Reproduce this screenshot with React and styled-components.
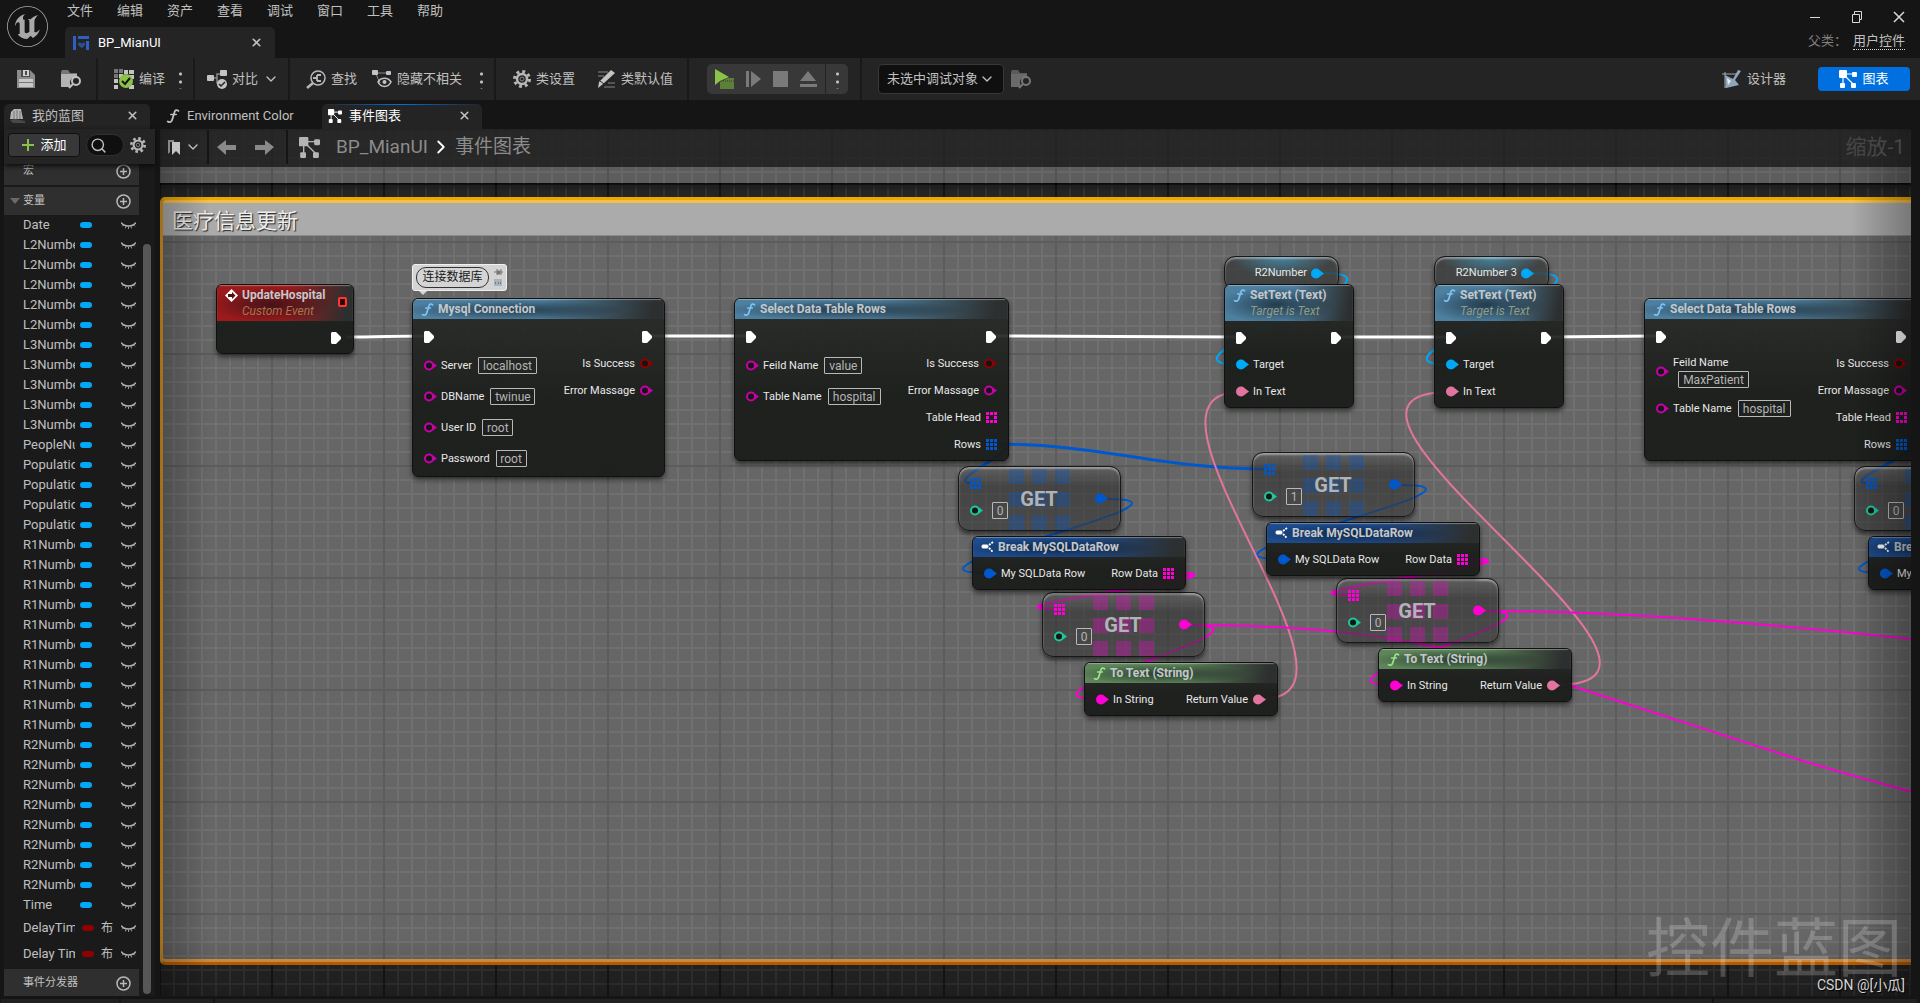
import React from "react";
import styled, { createGlobalStyle, css } from "styled-components";
import { ChevronDown, ChevronRight, Search, X } from "lucide-react";
import { SiUnrealengine } from "react-icons/si";

const vars = {
  font: `Roboto, "Noto Sans CJK SC", sans-serif`,
  window: "#151515",
  panel: "#242424",
  list: "#1a1a1a",
  section: "#2f2f2f",
  text: "#c0c0c0",
  bright: "#ffffff",
  primary: "#0070e0",
  green: "#8bc24a",
  exec: "#ffffff",
  object: "#00a8f8",
  string: "#c800a8",
  magenta: "#ff00d4",
  struct: "#0058cc",
  textPin: "#e2759f",
  int: "#1fc69c",
  bool: "#8f0000",
};

/* ---------- data ---------- */

const menu = ["文件", "编辑", "资产", "查看", "调试", "窗口", "工具", "帮助"];

const repeat = (name, count) => Array(count).fill(name);

const variables = [
  "Date",
  ...repeat("L2Number", 5),
  ...repeat("L3Number", 5),
  "PeopleNumber",
  ...repeat("Population", 4),
  ...repeat("R1Number", 10),
  ...repeat("R2Number", 8),
  "Time",
];

const selectOutputs = [
  { kind: "exec" },
  { label: "Is Success", kind: "ring", color: vars.bool },
  { label: "Error Massage", kind: "ring", color: vars.string },
  { label: "Table Head", kind: "frame", color: vars.magenta },
  { label: "Rows", kind: "array", color: vars.struct },
];

const setTextNode = {
  type: "func",
  title: "SetText (Text)",
  subtitle: "Target is Text",
  inputs: [
    { kind: "exec" },
    { label: "Target", kind: "dot", color: vars.object },
    { label: "In Text", kind: "dot", color: vars.textPin },
  ],
  outputs: [{ kind: "exec" }],
};

const breakNode = {
  type: "struct",
  title: "Break MySQLDataRow",
  inputs: [{ label: "My SQLData Row", kind: "dot", color: vars.struct }],
  outputs: [{ label: "Row Data", kind: "array", color: vars.magenta }],
};

const toTextNode = {
  type: "pure",
  title: "To Text (String)",
  inputs: [{ label: "In String", kind: "dot", color: vars.magenta }],
  outputs: [{ label: "Return Value", kind: "dot", color: vars.textPin }],
};

const nodes = [
  {
    x: 216,
    y: 284,
    w: 138,
    type: "event",
    title: "UpdateHospital",
    subtitle: "Custom Event",
    inputs: [],
    outputs: [{ kind: "exec" }],
  },
  {
    x: 412,
    y: 298,
    w: 253,
    type: "func",
    title: "Mysql Connection",
    roomy: true,
    inputs: [
      { kind: "exec" },
      { label: "Server", kind: "ring", color: vars.string, value: "localhost", w: 59 },
      { label: "DBName", kind: "ring", color: vars.string, value: "twinue", w: 45 },
      { label: "User ID", kind: "ring", color: vars.string, value: "root", w: 31 },
      { label: "Password", kind: "ring", color: vars.string, value: "root", w: 31 },
    ],
    outputs: selectOutputs.slice(0, 3),
  },
  {
    x: 734,
    y: 298,
    w: 275,
    type: "func",
    title: "Select Data Table Rows",
    roomy: true,
    inputs: [
      { kind: "exec" },
      { label: "Feild Name", kind: "ring", color: vars.string, value: "value", w: 38 },
      { label: "Table Name", kind: "ring", color: vars.string, value: "hospital", w: 53 },
    ],
    outputs: selectOutputs,
  },
  { x: 1224, y: 284, w: 130, ...setTextNode },
  { x: 1434, y: 284, w: 130, ...setTextNode },
  {
    x: 1644,
    y: 298,
    w: 275,
    type: "func",
    title: "Select Data Table Rows",
    roomy: true,
    inputs: [
      { kind: "exec" },
      { label: "Feild Name", kind: "ring", color: vars.string, value: "MaxPatient", w: 71, stacked: true },
      { label: "Table Name", kind: "ring", color: vars.string, value: "hospital", w: 53 },
    ],
    outputs: selectOutputs,
  },
  { x: 972, y: 536, w: 214, ...breakNode },
  { x: 1266, y: 522, w: 214, ...breakNode },
  { x: 1868, y: 536, w: 214, ...breakNode },
  { x: 1084, y: 662, w: 194, ...toTextNode },
  { x: 1378, y: 648, w: 194, ...toTextNode },
];

const getters = [
  { x: 1224, y: 256, name: "R2Number" },
  { x: 1434, y: 256, name: "R2Number 3" },
];

const arrayGets = [
  { x: 958, y: 466, color: vars.struct, index: "0" },
  { x: 1252, y: 452, color: vars.struct, index: "1" },
  { x: 1854, y: 466, color: vars.struct, index: "0" },
  { x: 1042, y: 592, color: vars.magenta, index: "0" },
  { x: 1336, y: 578, color: vars.magenta, index: "0" },
];

// [x1, y1, x2, y2, tangent, colour, width]
const wires = [
  [346, 337, 428, 336, 30, vars.exec, 3],
  [647, 336, 748, 336, 30, vars.exec, 3],
  [990, 336, 1240, 337, 60, vars.exec, 3],
  [1336, 337, 1450, 337, 30, vars.exec, 3],
  [1546, 337, 1656, 336, 30, vars.exec, 3],
  [1322, 273, 1242, 365, 112, vars.object, 2],
  [1532, 273, 1452, 365, 112, vars.object, 2],
  [994, 444, 1268, 469, 110, vars.struct, 3],
  [1000, 444, 972, 483, 32, vars.struct, 3],
  [1908, 444, 1868, 483, 32, vars.struct, 3],
  [1107, 499, 988, 573, 120, vars.struct, 2],
  [1401, 485, 1282, 559, 120, vars.struct, 2],
  [2003, 499, 1884, 573, 120, vars.struct, 2],
  [1174, 573, 1058, 609, 100, vars.magenta, 3],
  [1468, 559, 1352, 595, 100, vars.magenta, 3],
  [1190, 625, 1100, 699, 108, vars.magenta, 2],
  [1484, 611, 1394, 685, 108, vars.magenta, 2],
  [1262, 699, 1240, 392, 128, vars.textPin, 2],
  [1556, 685, 1450, 392, 186, vars.textPin, 2],
];

/* ---------- icons ---------- */

const GraphIcon = ({ size = 18, color = "currentColor" }) => (
  <svg width={size} height={size} viewBox="0 0 18 18" fill={color}>
    <path d="M4 5v10M4 4h11M5 5l9 9" stroke={color} strokeWidth="1.2" />
    <rect x="0" y="0" width="8" height="8" rx="1" />
    <rect x="13" y="2" width="5" height="5" rx="1" />
    <rect x="12" y="13" width="5" height="5" rx="1" />
    <rect x="1" y="13" width="5" height="5" rx="1" />
  </svg>
);

const FuncIcon = ({ color, size = 13 }) => (
  <svg width={size} height={size} viewBox="0 0 13 13" fill="none" stroke={color} strokeLinecap="round">
    <path d="M11.500 1.800C10 .3 8.400 1 7.800 3.200L5.800 9.800C5.100 12.200 3.300 12.800 1.600 11.600" strokeWidth="1.7" />
    <path d="M4.500 5h5" strokeWidth="1.4" />
  </svg>
);

const WidgetIcon = () => (
  <svg width="16" height="14" viewBox="0 0 16 14" fill="#2f5fc4">
    <path d="M0 0h3v14H0zM5 0h11v3H5zM13 5h3v9h-3z" />
    <path d="M5 8c0-2 3-2 4 0 1-2 3-2 3 0 0 2-3 4-3 4S5 10 5 8z" opacity=".7" />
  </svg>
);

const SaveIcon = () => (
  <svg width="18" height="18" viewBox="0 0 18 18">
    <path d="M0 0h13l5 5v13H0z" fill="#8c8c8c" />
    <path d="M4 0h9v7H4z" fill="#4a4a4a" />
    <path d="M6 0h6v6H6z" fill="#d0d0d0" />
    <path d="M8 1h2v4H8z" fill="#4a4a4a" />
    <path d="M2 9h14v8H2z" fill="#c8c8c8" />
    <path d="M2 12h14v1H2z" fill="#777" />
  </svg>
);

const BrowseIcon = ({ dim }) => (
  <svg width="21" height="19" viewBox="0 0 21 19">
    <path d="M0 2l1-2h6l2 3h7v3H0z" fill={dim ? "#5a5a5a" : "#777"} />
    <path d="M0 4h16v4c-5-2-9 3-6 8l-1 1H0z" fill={dim ? "#6a6a6a" : "#b4b4b4"} />
    <circle cx="15" cy="11" r="4" fill="none" stroke={dim ? "#777" : "#c0c0c0"} strokeWidth="2" />
    <path d="M12 14l-4 4" stroke={dim ? "#777" : "#c0c0c0"} strokeWidth="2" />
  </svg>
);

const CompileIcon = () => (
  <svg width="20" height="20" viewBox="0 0 20 20">
    <path d="M0 0h4v4H0zM5 0h4v4H5zM0 5h4v4H0z" fill="#777" />
    <path d="M10 1h4v4h-4zM15 1h5v4h-5zM5 5h4v4H5zM0 10h4v4H0zM0 16h4v4H0zM15 6h5v4h-5zM15 16h5v4h-5z" fill="#c4c4c4" />
    <circle cx="12" cy="12" r="7" fill={vars.green} />
    <path d="M8 12l3 3 5-6" fill="none" stroke="#151515" strokeWidth="2" />
  </svg>
);

const DiffIcon = () => (
  <svg width="20" height="19" viewBox="0 0 20 19">
    <path d="M4 8h6V4h5M10 8v5h4" fill="none" stroke="#888" strokeWidth="1.5" />
    <rect x="0" y="5" width="7" height="6" rx="1" fill="#c4c4c4" />
    <rect x="13" y="0" width="7" height="6" rx="1" fill="#c4c4c4" />
    <circle cx="15" cy="14" r="5" fill="#c4c4c4" />
    <path d="M12 14l2 2 4-4" fill="none" stroke="#242424" strokeWidth="1.5" />
  </svg>
);

const FindIcon = () => (
  <svg width="20" height="19" viewBox="0 0 20 19" fill="none" stroke="#b8b8b8" strokeWidth="1.5">
    <circle cx="12" cy="8" r="7" />
    <path d="M7 13l-6 5" strokeWidth="2.5" />
    <path d="M7 8h4M11 5v6M11 5h4M11 11h4" strokeWidth="1.8" />
  </svg>
);

const HideIcon = () => (
  <svg width="20" height="18" viewBox="0 0 20 18">
    <path d="M3 3h14M4 4l4 9" stroke="#888" />
    <rect x="0" y="0" width="6" height="5" rx="1" fill="#c4c4c4" />
    <rect x="14" y="1" width="5" height="4" rx="1" fill="#c4c4c4" />
    <path d="M6 12c3-5 10-5 13 0-3 6-10 6-13 0z" fill="none" stroke="#c4c4c4" strokeWidth="1.5" />
    <circle cx="12.500" cy="12" r="2" fill="#c4c4c4" />
  </svg>
);

const GearIcon = ({ size = 18 }) => (
  <svg width={size} height={size} viewBox="0 0 18 18" fill="none" stroke="#b8b8b8">
    <circle cx="9" cy="9" r="7.5" strokeWidth="3" strokeDasharray="2.9 3" />
    <circle cx="9" cy="9" r="5" strokeWidth="2.4" />
    <circle cx="9" cy="9" r="2" stroke="#888" />
  </svg>
);

const PencilIcon = () => (
  <svg width="19" height="18" viewBox="0 0 19 18">
    <path d="M1 2h10M1 6h6M11 13h7M7 17h11" stroke="#666" strokeWidth="1.4" />
    <path d="M14 0l4 3L6 14l-5 4 1-6z" fill="#c4c4c4" />
    <path d="M3 11l4 3" stroke="#242424" />
  </svg>
);

const PlayIcon = () => (
  <svg width="19" height="20" viewBox="0 0 19 20">
    <path d="M0 0l14 8-9 4-5 4z" fill={vars.green} />
    <path d="M5 13l8-4h6v11H5z" fill="#5d8038" />
    <path d="M8 12h11" stroke="#383838" strokeDasharray="1 1" />
  </svg>
);

const StepIcon = () => (
  <svg width="15" height="16" viewBox="0 0 15 16" fill="#7a7a7a">
    <path d="M0 0h3v16H0zM5 0l10 8-10 8z" />
  </svg>
);

const StopIcon = () => (
  <svg width="15" height="16" viewBox="0 0 15 16" fill="#7a7a7a">
    <path d="M0 0h15v16H0z" />
  </svg>
);

const EjectIcon = () => (
  <svg width="17" height="16" viewBox="0 0 17 16" fill="#7a7a7a">
    <path d="M8 0l8 10H0zM0 13h17v3H0z" />
  </svg>
);

const DesignerIcon = () => (
  <svg width="20" height="19" viewBox="0 0 20 19">
    <path d="M0 4h14M3 2v16M3 17l13-3" stroke="#a8a8a8" fill="none" />
    <path d="M3 5l8 4 5-9 3 1-6 9 4 5-13 3z" fill="#8fa6bf" />
    <path d="M5 8l4 3-3 4z" fill="#e4ecf4" />
  </svg>
);

const PanelIcon = () => (
  <svg width="15" height="14" viewBox="0 0 15 14">
    <path d="M0 10L1 3l3-3h7l2 10z" fill="#b4b4b4" />
    <path d="M4 2v8M7 1v9M10 2v8" stroke="#777" />
    <path d="M0 11l5-1 10 2v2H3z" fill="#484848" />
  </svg>
);

const BookmarkIcon = () => (
  <svg width="12" height="16" viewBox="0 0 12 16">
    <path d="M0 1h6v2H2v10l-2 2z" fill="#888" />
    <path d="M4 3h8v13l-4-4-4 4z" fill="#c4c4c4" />
  </svg>
);

const ArrowIcon = ({ back }) => (
  <svg width="20" height="15" viewBox="0 0 20 15" fill="#8a8a8a">
    <path d={back ? "M0 7l9-7v5h10v5H9v5z" : "M20 7l-9-7v5H1v5h10v5z"} />
  </svg>
);

const EyeClosed = () => (
  <svg width="15" height="7" viewBox="0 0 15 7" fill="none" stroke="#b0b0b0" strokeLinecap="round">
    <path d="M.5 1C3.500 5 11.500 5 14.500 1" strokeWidth="1.5" />
    <path d="M2.500 3L1.500 4M5 4.500L4.500 6M7.500 5v1.500M10 4.500l.5 1.500M12.500 3l1 1" strokeWidth=".9" />
  </svg>
);

const AddCircle = () => (
  <svg width="15" height="15" viewBox="0 0 15 15" fill="none" stroke="#b8b8b8" strokeWidth="1.5">
    <circle cx="7.500" cy="7.500" r="6.500" />
    <path d="M7.500 4v7M4 7.500h7" />
  </svg>
);

const BreakIcon = () => (
  <svg width="13" height="12" viewBox="0 0 13 12" fill="none" stroke="#fff">
    <rect x="1" y="4" width="6" height="3" rx="1" fill="#fff" />
    <path d="M8 4l4-3M8 7l4 4" strokeWidth="1.8" strokeDasharray="2 1" />
  </svg>
);

const EventIcon = () => (
  <svg width="13" height="13" viewBox="0 0 13 13">
    <path d="M6.500 0l6.500 6.500L6.500 13 0 6.500z" fill="#fff" />
    <path d="M7 3l3.500 3.500L7 10V8H3V5h4z" fill="#5a0c0c" />
  </svg>
);

const Pin = ({ kind, color }) => {
  if (kind === "exec") {
    return (
      <svg width="11" height="12" viewBox="0 0 11 12" fill="#fff">
        <path d="M1 0h4l5 5v2l-5 5H1l-1-1V1z" />
      </svg>
    );
  }
  if (kind === "array" || kind === "frame") {
    return (
      <svg width="11" height="11" viewBox="0 0 11 11" fill={color}>
        {[0, 4, 8].map((y) =>
          [0, 4, 8].map((x) =>
            kind === "frame" && x === 4 && y === 4 ? null : (
              <rect key={`${x}-${y}`} x={x} y={y} width="3" height="3" />
            )
          )
        )}
      </svg>
    );
  }
  return (
    <svg width="13" height="11" viewBox="0 0 13 11">
      <circle
        cx="5"
        cy="5.500"
        r="4"
        fill={kind === "dot" ? color : "#151515"}
        stroke={color}
        strokeWidth="2"
      />
      <path d="M9 2.500l4 3-4 3z" fill={color} />
    </svg>
  );
};

/* ---------- graph parts ---------- */

const Wires = () => (
  <WireLayer>
    {wires.map(([x1, y1, x2, y2, t, color, width], i) => (
      <path
        key={i}
        d={`M${x1} ${y1} C${x1 + t} ${y1} ${x2 - t} ${y2} ${x2} ${y2}`}
        stroke={color}
        strokeWidth={width}
      />
    ))}
    <path
      d="M1190 625C1380 625 1470 652 1572 686L1800 760Q1856 777 1920 794"
      stroke={vars.magenta}
      strokeWidth="2"
    />
    <path d="M1484 611C1620 611 1770 624 1920 640" stroke={vars.magenta} strokeWidth="2" />
  </WireLayer>
);

const InputPin = ({ label, kind, color, value, w, stacked }) => (
  <InputRow as={value ? "label" : "div"} $tall={!!value} $stacked={stacked}>
    <PinSlot>
      <Pin kind={kind} color={color} />
    </PinSlot>
    <PinField $stacked={stacked}>
      {label && <span>{label}</span>}
      {value && <ValueInput defaultValue={value} $w={w} $inset={stacked} />}
    </PinField>
  </InputRow>
);

const GraphNode = ({ x, y, w, type, title, subtitle, inputs, outputs, roomy }) => (
  <NodeBox $x={x} $y={y} $w={w}>
    <NodeHeader $type={type} $tall={!!subtitle}>
      <HeaderIcon>
        {type === "event" && <EventIcon />}
        {type === "struct" && <BreakIcon />}
        {type === "func" && <FuncIcon color="#7cc4f4" />}
        {type === "pure" && <FuncIcon color="#9fe08c" />}
      </HeaderIcon>
      <div>
        <NodeTitle>{title}</NodeTitle>
        {subtitle && <NodeSubtitle $type={type}>{subtitle}</NodeSubtitle>}
      </div>
      {type === "event" && <DelegatePin />}
    </NodeHeader>
    <NodeBody $roomy={roomy}>
      <div>
        {inputs.map((pin, i) => (
          <InputPin key={i} {...pin} />
        ))}
      </div>
      <div>
        {outputs.map((pin, i) => (
          <OutputRow key={i}>
            {pin.label && <span>{pin.label}</span>}
            <Pin {...pin} />
          </OutputRow>
        ))}
      </div>
    </NodeBody>
  </NodeBox>
);

const ArrayGet = ({ x, y, color, index }) => (
  <GetBox $x={x} $y={y}>
    <Tiles>
      {repeat(color, 9).map((c, i) => (
        <Tile key={i} $color={c} />
      ))}
    </Tiles>
    <GetInputs>
      <Pin kind="array" color={color} />
      <GetIndex>
        <Pin kind="ring" color={vars.int} />
        <ValueInput defaultValue={index} $w={16} aria-label="Index" />
      </GetIndex>
    </GetInputs>
    <GetTitle>GET</GetTitle>
    <GetOutput>
      <Pin kind="dot" color={color} />
    </GetOutput>
  </GetBox>
);

/* ---------- page ---------- */

const TitleBar = () => (
  <StyledTitleBar>
    <Logo>
      <SiUnrealengine size={41} />
    </Logo>
    <TitleMain>
      <Menu>
        {menu.map((item) => (
          <MenuItem key={item}>{item}</MenuItem>
        ))}
      </Menu>
      <AssetTab>
        <WidgetIcon />
        <span>BP_MianUI</span>
        <TabClose aria-label="Close">
          <X size={13} strokeWidth={3} />
        </TabClose>
      </AssetTab>
    </TitleMain>
    <TitleSide>
      <WindowButtons>
        <PlainButton aria-label="Minimize">
          <svg width="12" height="12" stroke="#d8d8d8">
            <path d="M1 6.500h10" />
          </svg>
        </PlainButton>
        <PlainButton aria-label="Restore">
          <svg width="12" height="12" fill="none" stroke="#d8d8d8">
            <path d="M1.500 3.500h7v8h-7zM3.500 3V.5h7v8H9" />
          </svg>
        </PlainButton>
        <PlainButton aria-label="Close window">
          <svg width="12" height="12" stroke="#d8d8d8" strokeWidth="1.500">
            <path d="M1 1l10 10M11 1L1 11" />
          </svg>
        </PlainButton>
      </WindowButtons>
      <ParentClass>
        <span>父类：</span>
        <a href="#parent">用户控件</a>
      </ParentClass>
    </TitleSide>
  </StyledTitleBar>
);

const MainToolbar = () => (
  <Toolbar>
    <ToolGroup $pad={17} $w={98}>
      <ToolButton aria-label="Save">
        <SaveIcon />
      </ToolButton>
      <ToolButton aria-label="Browse" $push>
        <BrowseIcon />
      </ToolButton>
    </ToolGroup>
    <ToolGroup $pad={16} $w={97}>
      <ToolButton>
        <CompileIcon />
        编译
      </ToolButton>
      <Dots $push />
    </ToolGroup>
    <ToolGroup $pad={12} $w={95}>
      <ToolButton>
        <DiffIcon />
        对比
        <ChevronDown size={16} />
      </ToolButton>
    </ToolGroup>
    <ToolGroup $pad={16} $w={206}>
      <ToolButton>
        <FindIcon />
        查找
      </ToolButton>
      <ToolButton $push>
        <HideIcon />
        隐藏不相关
      </ToolButton>
      <Dots $push />
    </ToolGroup>
    <ToolGroup $pad={17} $w={193}>
      <ToolButton>
        <GearIcon />
        类设置
      </ToolButton>
      <ToolButton $push>
        <PencilIcon />
        类默认值
      </ToolButton>
    </ToolGroup>
    <ToolGroup $pad={18} $w={173}>
      <PlayControls>
        <ToolButton aria-label="Play">
          <PlayIcon />
        </ToolButton>
        <ToolButton aria-label="Step">
          <StepIcon />
        </ToolButton>
        <ToolButton aria-label="Stop">
          <StopIcon />
        </ToolButton>
        <ToolButton aria-label="Eject">
          <EjectIcon />
        </ToolButton>
        <PlayMore>
          <Dots />
        </PlayMore>
      </PlayControls>
    </ToolGroup>
    <DebugTarget>
      <SelectWrap>
        <select aria-label="调试对象">
          <option>未选中调试对象</option>
        </select>
        <ChevronDown size={16} />
      </SelectWrap>
      <BrowseIcon dim />
    </DebugTarget>
    <Modes>
      <ToolButton>
        <DesignerIcon />
        设计器
      </ToolButton>
      <ModeActive>
        <GraphIcon size={18} />
        图表
      </ModeActive>
    </Modes>
  </Toolbar>
);

const Sidebar = () => (
  <StyledSidebar>
    <SideTab>
      <PanelIcon />
      <span>我的蓝图</span>
      <TabClose aria-label="Close">
        <X size={13} strokeWidth={3} />
      </TabClose>
    </SideTab>
    <SideTools>
      <AddButton>
        <svg width="14" height="14" stroke={vars.green} strokeWidth="2">
          <path d="M7 1v12M1 7h12" />
        </svg>
        添加
      </AddButton>
      <SearchBox>
        <Search size={17} />
        <input aria-label="Search" />
      </SearchBox>
      <PlainButton aria-label="Settings">
        <GearIcon size={16} />
      </PlainButton>
    </SideTools>
    <SideList>
      <SideScroll>
        <Section $first>
          <span>宏</span>
          <PlainButton aria-label="Add macro">
            <AddCircle />
          </PlainButton>
        </Section>
        <Section>
          <Caret />
          <span>变量</span>
          <PlainButton aria-label="Add variable">
            <AddCircle />
          </PlainButton>
        </Section>
        {variables.map((name, i) => (
          <VarRow key={i}>
            <VarName>{name}</VarName>
            <Pill />
            <PlainButton aria-label="Toggle visibility">
              <EyeClosed />
            </PlainButton>
          </VarRow>
        ))}
        {["DelayTime", "Delay Time"].map((name) => (
          <VarRow key={name} $tall>
            <VarName>{name}</VarName>
            <Pill $bool />
            <VarType>布尔</VarType>
            <PlainButton aria-label="Toggle visibility">
              <EyeClosed />
            </PlainButton>
          </VarRow>
        ))}
        <Section>
          <span>事件分发器</span>
          <PlainButton aria-label="Add dispatcher">
            <AddCircle />
          </PlainButton>
        </Section>
      </SideScroll>
      <ScrollThumb />
    </SideList>
  </StyledSidebar>
);

const GraphPanel = () => (
  <StyledGraphPanel>
    <GraphTabs>
      <GraphTab>
        <FuncIcon color="#c0c0c0" size={14} />
        <span>Environment Color</span>
      </GraphTab>
      <GraphTab $active>
        <GraphIcon size={14} />
        <span>事件图表</span>
        <TabClose aria-label="Close">
          <X size={13} strokeWidth={3} />
        </TabClose>
      </GraphTab>
    </GraphTabs>
    <Canvas>
      <Board>
        <UpperComment />
        <Comment>
          <CommentTitle>医疗信息更新</CommentTitle>
        </Comment>
        <Wires />
        {getters.map((g) => (
          <GetterBox key={g.name} $x={g.x} $y={g.y}>
            {g.name}
            <Pin kind="dot" color={vars.object} />
          </GetterBox>
        ))}
        {arrayGets.map((g, i) => (
          <ArrayGet key={i} {...g} />
        ))}
        {nodes.map((n, i) => (
          <GraphNode key={i} {...n} />
        ))}
        <Bubble>
          <BubbleText>连接数据库</BubbleText>
          <svg width="9" height="19" viewBox="0 0 9 19">
            <path d="M0 4h3M3 1v6M3 3h3v3H3M7 1v6M7 4h2" stroke="#777" fill="#777" />
            <path d="M0 11h8v7H0z" fill="#a9b3bd" />
            <path d="M1 15h1M4 15h1M6 15h1" stroke="#444" />
          </svg>
        </Bubble>
      </Board>
      <Vignette />
      <GraphBar>
        <BarPart $w={49}>
          <BookmarkIcon />
          <ChevronDown size={16} />
        </BarPart>
        <BarPart $w={79} $end={12}>
          <PlainButton aria-label="Back">
            <ArrowIcon back />
          </PlainButton>
          <PlainButton aria-label="Forward">
            <ArrowIcon />
          </PlainButton>
        </BarPart>
        <Crumbs>
          <GraphIcon size={21} color="#b4b4b4" />
          <span>BP_MianUI</span>
          <ChevronRight size={22} color="#fff" />
          <span>事件图表</span>
        </Crumbs>
        <Zoom>缩放-1</Zoom>
      </GraphBar>
      <Watermark>控件蓝图</Watermark>
      <Credit>CSDN @[小瓜]</Credit>
    </Canvas>
  </StyledGraphPanel>
);

const App = () => {
  return (
    <>
      <GlobalStyle />
      <Page>
        <TitleBar />
        <MainToolbar />
        <Workspace>
          <Sidebar />
          <GraphPanel />
        </Workspace>
        <StatusBar>
          <StatusPart $w={118} />
          <StatusPart $w={92} />
          <StatusPart />
          <StatusPart $w={203} />
        </StatusBar>
      </Page>
    </>
  );
};

export default App;

/* ---------- styles ---------- */

const GlobalStyle = createGlobalStyle`
  * {
    box-sizing: border-box;
  }
  body {
    margin: 0;
    background: ${vars.window};
    color: ${vars.text};
    font-family: ${vars.font};
    font-size: 13px;
    line-height: 16px;
  }
  button, input, select {
    font: inherit;
    color: inherit;
  }
  svg {
    display: block;
    flex: none;
  }
`;

const Page = styled.div`
  display: flex;
  flex-direction: column;
  height: 100vh;
  overflow: hidden;
`;

const PlainButton = styled.button`
  display: flex;
  align-items: center;
  padding: 0;
  border: 0;
  background: none;
`;

const StyledTitleBar = styled.header`
  display: flex;
  height: 58px;
  flex: none;
`;

const Logo = styled.div`
  width: 65px;
  padding: 6px 0 0 7px;
  color: #a8a8a8;
`;

const TitleMain = styled.div`
  flex: 1;
`;

const Menu = styled.nav`
  display: flex;
  gap: 24px;
  height: 27px;
  padding: 2px 0 0 2px;
`;

const MenuItem = styled.button`
  height: 18px;
  padding: 0;
  border: 0;
  background: none;
`;

const tab = css`
  display: flex;
  align-items: center;
  background: ${vars.panel};
  border-radius: 5px 5px 0 0;
`;

const AssetTab = styled.div`
  ${tab}
  width: 210px;
  height: 31px;
  padding: 0 12px 0 8px;
  gap: 9px;
  color: ${vars.bright};
`;

const TabClose = styled(PlainButton)`
  margin-left: auto;
  color: #c0c0c0;
`;

const TitleSide = styled.div`
  display: flex;
  flex-direction: column;
  align-items: flex-end;
  padding: 11px 15px 0 0;
  gap: 10px;
`;

const WindowButtons = styled.div`
  display: flex;
  gap: 30px;
`;

const ParentClass = styled.div`
  display: flex;
  gap: 6px;
  color: #808080;

  a {
    color: ${vars.text};
    text-decoration: none;
    border-bottom: 1px dotted #d8d8d8;
  }
`;

const Toolbar = styled.div`
  display: flex;
  flex: none;
  height: 42px;
  background: ${vars.panel};
`;

const ToolGroup = styled.div`
  display: flex;
  align-items: center;
  width: ${(p) => p.$w}px;
  padding: 0 11px 0 ${(p) => p.$pad}px;
  border-right: 2px solid #191919;
`;

const ToolButton = styled.button`
  display: flex;
  align-items: center;
  gap: 5px;
  padding: 0;
  border: 0;
  background: none;
  margin-left: ${(p) => (p.$push ? "auto" : 0)};
  margin-right: ${(p) => (p.$push ? "3px" : 0)};
  white-space: nowrap;
`;

const Dots = styled.span`
  width: 3px;
  height: 19px;
  margin-left: ${(p) => (p.$push ? "auto" : 0)};
  background: radial-gradient(circle, #c4c4c4 0 1px, transparent 2px) 0 0 / 3px 8px;
`;

const PlayControls = styled.div`
  display: flex;
  align-items: center;
  gap: 12px;
  width: 141px;
  height: 30px;
  flex: none;
  padding-left: 8px;
  background: #383838;
  border-radius: 5px;
`;

const PlayMore = styled.div`
  display: flex;
  align-items: center;
  justify-content: center;
  align-self: stretch;
  flex: 1;
  margin-left: -4px;
  border-left: 1px solid #242424;
`;

const DebugTarget = styled.div`
  display: flex;
  align-items: center;
  gap: 7px;
  padding-left: 16px;
`;

const SelectWrap = styled.div`
  display: flex;
  align-items: center;
  width: 126px;
  height: 30px;
  padding: 0 8px;
  background: #0f0f0f;
  border: 1px solid #383838;
  border-radius: 4px;

  select {
    flex: 1;
    min-width: 0;
    padding: 0;
    appearance: none;
    border: 0;
    background: none;
  }
`;

const Modes = styled.div`
  display: flex;
  align-items: center;
  gap: 32px;
  margin-left: auto;
  padding-right: 10px;
`;

const ModeActive = styled(ToolButton)`
  justify-content: center;
  width: 92px;
  height: 24px;
  background: ${vars.primary};
  border-radius: 4px;
  color: ${vars.bright};
`;

const Workspace = styled.main`
  display: flex;
  flex: 1;
  gap: 5px;
  min-height: 0;
  padding: 4px 9px 0 4px;
`;

const StyledSidebar = styled.aside`
  display: flex;
  flex-direction: column;
  width: 151px;
  flex: none;
`;

const SideTab = styled.div`
  ${tab}
  width: 146px;
  height: 25px;
  flex: none;
  gap: 7px;
  padding: 0 11px 2px 6px;
`;

const SideTools = styled.div`
  display: flex;
  align-items: center;
  gap: 6px;
  height: 35px;
  flex: none;
  padding: 0 4px 3px;
  background: ${vars.panel};
  box-shadow: 0 2px 5px #0a0a0a;
  z-index: 1;
`;

const AddButton = styled.button`
  display: flex;
  align-items: center;
  justify-content: center;
  gap: 5px;
  width: 72px;
  height: 24px;
  padding: 0;
  background: #383838;
  border: 1px solid #101010;
  border-radius: 4px;
  color: ${vars.bright};
`;

const SearchBox = styled.label`
  display: flex;
  align-items: center;
  width: 38px;
  height: 22px;
  padding-left: 3px;
  background: #0f0f0f;
  border: 1px solid #303030;
  border-radius: 11px;

  input {
    width: 10px;
    padding: 0;
    border: 0;
    background: none;
  }
`;

const SideList = styled.div`
  display: flex;
  justify-content: space-between;
  flex: 1;
  min-height: 0;
  background: ${vars.list};
`;

const SideScroll = styled.div`
  width: 135px;
  overflow: hidden;
`;

const ScrollThumb = styled.div`
  width: 8px;
  margin: 80px 4px 2px 0;
  background: #575757;
  border-radius: 4px;
`;

const Section = styled.div`
  position: relative;
  display: flex;
  align-items: center;
  justify-content: space-between;
  height: 28px;
  margin-top: ${(p) => (p.$first ? "-7px" : "2px")};
  padding: 0 8px 0 19px;
  background: ${vars.section};
  font-size: 11px;
`;

const Caret = styled.i`
  position: absolute;
  left: 6px;
  border: 5px solid transparent;
  border-top: 6px solid #6a6a6a;
  border-bottom: 0;
`;

const VarRow = styled.div`
  display: flex;
  align-items: center;
  height: ${(p) => (p.$tall ? 26 : 20)}px;
  padding: 0 3px 0 19px;

  button {
    margin-left: auto;
  }
`;

const VarName = styled.span`
  width: 52px;
  overflow: hidden;
  white-space: nowrap;
`;

const Pill = styled.i`
  width: 12px;
  height: 6px;
  margin-left: ${(p) => (p.$bool ? 7 : 5)}px;
  background: ${(p) => (p.$bool ? vars.bool : vars.object)};
  border-radius: 3px;
`;

const VarType = styled.span`
  width: 12px;
  margin-left: 7px;
  overflow: hidden;
  white-space: nowrap;
  font-size: 12px;
`;

const StyledGraphPanel = styled.section`
  display: flex;
  flex-direction: column;
  flex: 1;
  min-width: 0;
`;

const GraphTabs = styled.div`
  display: flex;
  height: 25px;
  flex: none;
`;

const GraphTab = styled.div`
  display: flex;
  align-items: center;
  gap: 7px;
  width: 162px;
  padding: 0 6px 2px;
  white-space: nowrap;

  ${(p) =>
    p.$active &&
    css`
      width: 160px;
      padding-right: 11px;
      background: linear-gradient(to right, transparent, ${vars.primary}, transparent) 0 0 / 100% 1px
          no-repeat,
        ${vars.panel};
      border-radius: 5px 5px 0 0;
      color: ${vars.bright};
    `}
`;

const Canvas = styled.div`
  position: relative;
  flex: 1;
  overflow: hidden;
  background: #252525;
`;

// the board keeps graph coordinates, the view is scrolled by this offset
const Board = styled.div`
  position: absolute;
  left: -160px;
  top: -129px;
  right: 0;
  bottom: 0;
  background: linear-gradient(to right, #161616 2px, transparent 2px) 47px 17px / 112px 112px,
    linear-gradient(#161616 2px, transparent 2px) 47px 17px / 112px 112px,
    linear-gradient(to right, #333 2px, transparent 2px) 5px 3px / 14px 14px,
    linear-gradient(#333 2px, transparent 2px) 5px 3px / 14px 14px;
`;

const UpperComment = styled.div`
  position: absolute;
  left: 0;
  right: -20px;
  top: 100px;
  height: 83px;
  background: rgba(255, 255, 255, 0.26);
  box-shadow: 0 2px 6px #000;
`;

const Comment = styled.div`
  position: absolute;
  left: 160px;
  right: -20px;
  top: 197px;
  height: 768px;
  padding: 3px 0 0;
  background: rgba(255, 255, 255, 0.3);
  border: 3px solid;
  border-color: #f0a800 #f0a800 #c66200 #d89424;
  border-radius: 5px 5px 0 5px;
  box-shadow: inset 0 3px 0 #f3c04a, inset 0 -3px 0 #dc9440;
`;

const CommentTitle = styled.h2`
  height: 33px;
  margin: 0;
  padding: 1px 0 0 9px;
  background: #ababab;
  border-bottom: 1px solid #8a8a8a;
  color: #eee;
  font-size: 21px;
  font-weight: 400;
  line-height: 34px;
  text-shadow: 1px 1px 1px #222;
`;

const WireLayer = styled.svg`
  position: absolute;
  left: 0;
  top: 0;
  width: 100%;
  height: 100%;
  fill: none;
  overflow: visible;
`;

const nodeShadow = "0 3px 5px rgba(0, 0, 0, 0.55)";

const NodeBox = styled.article`
  position: absolute;
  left: ${(p) => p.$x}px;
  top: ${(p) => p.$y}px;
  width: ${(p) => p.$w}px;
  background: linear-gradient(rgba(38, 40, 38, 0.9), rgba(26, 28, 26, 0.94) 60%);
  border: 1px solid #101010;
  border-radius: 6px;
  box-shadow: ${nodeShadow};
  color: #e8e8e8;
  font-size: 11px;
  overflow: hidden;
`;

const headerColors = {
  event: "#9c1a1c",
  func: "#4d7f9f",
  struct: "#1d4b8c",
  pure: "#5c8558",
};

const NodeHeader = styled.header`
  display: flex;
  align-items: flex-start;
  gap: 5px;
  height: ${(p) => (p.$tall ? 36 : 20)}px;
  padding: 2px 6px 0 8px;
  background: radial-gradient(ellipse 45% 50% at 40% 55%, rgba(8, 14, 22, 0.6), transparent),
    linear-gradient(100deg, ${(p) => headerColors[p.$type]} 50%, rgba(45, 48, 48, 0.9) 95%);
  box-shadow: inset 0 1px 1px rgba(255, 255, 255, 0.35);
`;

const HeaderIcon = styled.span`
  display: flex;
  justify-content: center;
  align-items: center;
  width: 12px;
  height: 16px;
`;

const NodeTitle = styled.div`
  color: #c4c8ca;
  font-size: 12px;
  font-weight: 700;
  white-space: nowrap;
`;

const NodeSubtitle = styled.div`
  color: ${(p) => (p.$type === "event" ? "#a8744e" : "#8f9c84")};
  font-size: 12px;
  font-style: italic;
`;

const DelegatePin = styled.i`
  width: 9px;
  height: 10px;
  margin: 10px 0 0 auto;
  border: 2px solid #ff3434;
  border-radius: 2px;
  background: #300;
`;

const NodeBody = styled.div`
  display: flex;
  justify-content: space-between;
  padding: ${(p) => (p.$roomy ? 4 : 3)}px 11px 2px;
`;

const InputRow = styled.div`
  display: flex;
  align-items: center;
  height: ${(p) => (p.$stacked ? 43 : p.$tall ? 31 : 27)}px;
`;

const PinSlot = styled.span`
  width: 17px;
`;

const PinField = styled.span`
  display: flex;
  flex-direction: ${(p) => (p.$stacked ? "column" : "row")};
  align-items: ${(p) => (p.$stacked ? "flex-start" : "center")};
  gap: ${(p) => (p.$stacked ? 0 : 6)}px;
  white-space: nowrap;
`;

const ValueInput = styled.input`
  width: ${(p) => p.$w}px;
  height: 17px;
  margin-left: ${(p) => (p.$inset ? 5 : 0)}px;
  padding: 0;
  background: none;
  border: 1px solid #b8b8b8;
  border-radius: 1px;
  color: #b4b4b4;
  font-size: 12px;
  text-align: center;
`;

const OutputRow = styled.div`
  display: flex;
  align-items: center;
  justify-content: flex-end;
  gap: 5px;
  height: 27px;
  white-space: nowrap;
`;

const glass = css`
  position: absolute;
  left: ${(p) => p.$x}px;
  top: ${(p) => p.$y}px;
  border: 1px solid #181818;
  border-radius: 11px;
  box-shadow: inset 0 2px 2px rgba(255, 255, 255, 0.4), ${nodeShadow};
`;

const GetterBox = styled.div`
  ${glass}
  display: flex;
  align-items: center;
  justify-content: flex-end;
  gap: 4px;
  width: 115px;
  height: 34px;
  padding-right: 14px;
  background: radial-gradient(ellipse 45% 60% at 50% 0, rgba(70, 160, 200, 0.7), transparent),
    rgba(58, 60, 60, 0.8);
  color: #e8e8e8;
  font-size: 11px;
`;

const GetBox = styled.article`
  ${glass}
  display: flex;
  align-items: center;
  justify-content: space-between;
  width: 163px;
  height: 65px;
  padding: 0 12px 0 11px;
  background: linear-gradient(rgba(90, 90, 90, 0.6), rgba(46, 46, 46, 0.6) 30%, rgba(54, 54, 54, 0.6));
`;

const Tiles = styled.div`
  position: absolute;
  left: 50px;
  top: 2px;
  display: grid;
  grid-template-columns: repeat(3, 15px);
  gap: 8px;
`;

const Tile = styled.i`
  height: 15px;
  background: ${(p) => p.$color};
  opacity: 0.3;
`;

const GetInputs = styled.div`
  display: flex;
  flex-direction: column;
  gap: 13px;
  width: 40px;
`;

const GetIndex = styled.label`
  display: flex;
  align-items: center;
  gap: 9px;
`;

const GetTitle = styled.strong`
  position: relative;
  color: #b0b4b8;
  font-size: 20px;
  line-height: 24px;
`;

const GetOutput = styled.div`
  display: flex;
  justify-content: flex-end;
  width: 40px;
`;

const Bubble = styled.div`
  position: absolute;
  left: 412px;
  top: 264px;
  display: flex;
  align-items: center;
  gap: 5px;
  width: 95px;
  height: 27px;
  padding: 0 3px;
  background: #d4d4d4;
  border: 1px solid #f0f0f0;
  border-radius: 3px;

  &::after {
    content: "";
    position: absolute;
    left: 6px;
    top: 26px;
    border: 4px solid transparent;
    border-top-color: #d4d4d4;
    border-bottom: 0;
  }
`;

const BubbleText = styled.span`
  width: 76px;
  height: 21px;
  border: 1px solid #333;
  border-radius: 10px;
  color: #1a1a1a;
  font-size: 12px;
  line-height: 18px;
  text-align: center;
`;

const Vignette = styled.div`
  position: absolute;
  inset: 0;
  pointer-events: none;
  background: linear-gradient(to right, rgba(0, 0, 0, 0.25), transparent 50px),
    linear-gradient(to left, rgba(0, 0, 0, 0.3), transparent 60px),
    linear-gradient(to top, rgba(0, 0, 0, 0.2), transparent 60px);
`;

const GraphBar = styled.div`
  position: relative;
  display: flex;
  align-items: center;
  height: 38px;
  padding-bottom: 2px;
  background: rgba(18, 18, 18, 0.72);
`;

const BarPart = styled.div`
  display: flex;
  align-items: center;
  justify-content: space-between;
  width: ${(p) => p.$w}px;
  height: 34px;
  padding: 0 ${(p) => p.$end || 6}px 0 8px;
  border-right: 2px solid #151515;
`;

const Crumbs = styled.div`
  display: flex;
  align-items: center;
  padding-left: 11px;
  color: #8c8c8c;
  font-size: 19px;
  line-height: 24px;

  span:first-of-type {
    margin: 0 2px 0 16px;
  }

  span:last-of-type {
    margin-left: 3px;
  }
`;

const Zoom = styled.div`
  margin-left: auto;
  padding-right: 6px;
  color: #474747;
  font-size: 21px;
  line-height: 24px;
`;

const Watermark = styled.div`
  position: absolute;
  right: 9px;
  bottom: 10px;
  color: rgba(255, 255, 255, 0.2);
  font-size: 64px;
  line-height: 72px;
`;

const Credit = styled.div`
  position: absolute;
  right: 6px;
  bottom: 2px;
  color: #d4d4d4;
  font-size: 14px;
  line-height: 18px;
  text-shadow: 1px 1px 1px #000;
`;

const StatusBar = styled.footer`
  display: flex;
  gap: 2px;
  height: 7px;
  flex: none;
  padding: 3px 3px 0 1px;
`;

const StatusPart = styled.div`
  ${(p) => (p.$w ? `width: ${p.$w}px;` : "flex: 1;")}
  background: #212121;
`;
